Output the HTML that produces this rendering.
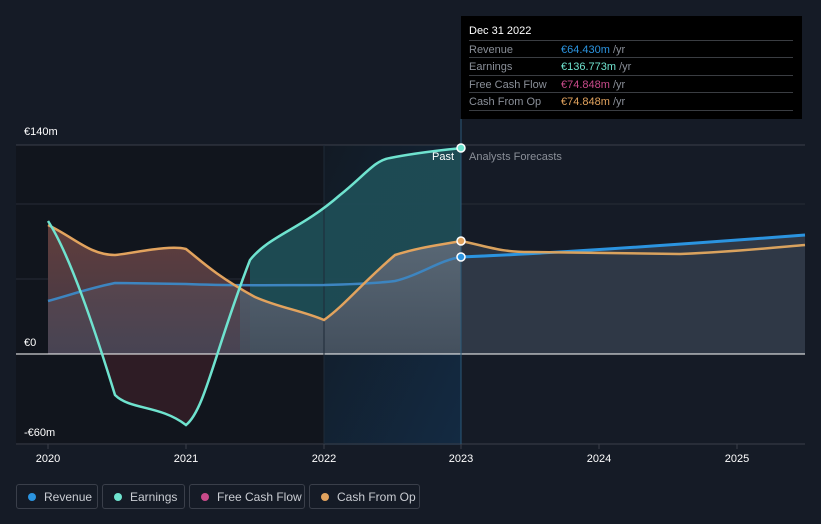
<!DOCTYPE html>
<html><head><style>
body{margin:0;background:#151b26;font-family:"Liberation Sans",sans-serif;}
.wrap{position:relative;width:821px;height:524px;overflow:hidden;background:#151b26;}
.tt{position:absolute;left:461px;top:16px;width:341px;height:103px;background:#000;}
.tt .h{position:absolute;left:8px;top:9px;color:#fff;font-size:11px;}
.tt .r{position:absolute;left:8px;width:324px;border-top:1px solid #3a3d42;height:17px;font-size:11px;color:#8a8f98;}
.tt .r span{position:absolute;left:0;top:3px}
.tt .r b{position:absolute;left:92px;top:3px;font-weight:normal}
.lg{position:absolute;top:484px;height:25px;border:1px solid #3a3f4a;border-radius:3px;color:#c9ccd2;font-size:12px;box-sizing:border-box;}
.lg i{position:absolute;left:11px;top:8px;width:8px;height:8px;border-radius:50%}
.lg span{position:absolute;left:27px;top:5px}
</style></head><body><div class="wrap">
<svg width="821" height="524" style="position:absolute;left:0;top:0">
<defs>
<linearGradient id="fc" x1="0" y1="0" x2="1" y2="1"><stop offset="0" stop-color="#121a24"/><stop offset="1" stop-color="#132a42"/></linearGradient>
<linearGradient id="gr" x1="0" y1="0" x2="0" y2="1"><stop offset="0" stop-color="#5e6a78"/><stop offset="1" stop-color="#47505e"/></linearGradient>
<linearGradient id="rd" x1="0" y1="0" x2="0" y2="1"><stop offset="0" stop-color="#613e3c"/><stop offset="1" stop-color="#3f3848"/></linearGradient>
<clipPath id="L"><rect x="0" y="0" width="240" height="524"/></clipPath>
<clipPath id="R"><rect x="240" y="0" width="600" height="524"/></clipPath>
<clipPath id="P"><rect x="0" y="0" width="461" height="524"/></clipPath>
</defs>
<rect x="16" y="145" width="308" height="300" fill="#11151d"/>
<rect x="324" y="145" width="137" height="300" fill="url(#fc)"/>
<line x1="16" y1="145" x2="805" y2="145" stroke="#3a3f4a"/>
<line x1="16" y1="204" x2="805" y2="204" stroke="#262c37"/>
<line x1="16" y1="279" x2="805" y2="279" stroke="#262c37"/>
<line x1="16" y1="444" x2="805" y2="444" stroke="#3a3f4a"/>
<!-- earnings teal area right -->
<path clip-path="url(#R)" d="M48,221 C70,255 95,330 115,395 C130,410 160,405 186,425 C205,410 215,350 250,260 C270,235 300,230 340,195 C365,175 375,160 390,158 C420,152 445,150 461,148 L461,354 L48,354Z" fill="#1f4d55" opacity="0.95"/>
<!-- below zero earnings red -->
<path d="M48,221 C70,255 95,330 115,395 C130,410 160,405 186,425 C205,410 215,350 250,260 L250,354 L48,354Z" fill="#2e1c25"/>
<!-- cash area -->
<path clip-path="url(#L)" d="M48,225 C75,238 90,255 115,255 C140,252 170,245 186,249 C200,260 215,275 255,297 L255,354 L48,354Z" fill="url(#rd)"/>
<path clip-path="url(#R)" d="M186,249 C200,260 215,275 255,297 C280,308 300,310 324,320 C345,305 360,285 395,255 C420,247 440,245 461,241 L461,354 L186,354Z" fill="url(#gr)" opacity="0.92"/>
<path d="M461,241 C490,247 500,252 530,252 C600,253 650,254 680,254 C730,252 770,248 805,245 L805,354 L461,354Z" fill="#2c333e"/>
<path d="M461,257 C560,253 700,243 805,235 L805,354 L461,354Z" fill="#2f3846"/>
<path clip-path="url(#L)" d="M48,301 C70,295 90,288 115,283 L186,284 C230,286 280,285 324,285 L324,354 L48,354Z" fill="#8090a8" opacity="0.12"/>
<line x1="16" y1="354" x2="805" y2="354" stroke="#ffffff" stroke-width="1"/>
<line x1="461" y1="119" x2="461" y2="444" stroke="#2a5a7a"/>
<line x1="324" y1="145" x2="324" y2="444" stroke="#1e2a38"/>
<!-- lines -->
<path d="M48,301 C70,295 90,288 115,283 L186,284 C230,286 280,285 324,285 C360,284 380,283 395,281 C420,275 440,260 461,257" fill="none" stroke="#3d85c0" stroke-width="2.5"/>
<path d="M461,257 C560,253 700,243 805,235" fill="none" stroke="#2b94e0" stroke-width="3"/>
<path d="M48,225 C75,238 90,255 115,255 C140,252 170,245 186,249 C200,260 215,275 255,297 C280,308 300,310 324,320 C345,305 360,285 395,255 C420,247 440,245 461,241" fill="none" stroke="#e2a35e" stroke-width="2.5"/>
<path d="M461,241 C490,247 500,252 530,252 C600,253 650,254 680,254 C730,252 770,248 805,245" fill="none" stroke="#d9a25e" stroke-width="2.5"/>
<path d="M48,221 C70,255 95,330 115,395 C130,410 160,405 186,425 C205,410 215,350 250,260 C270,235 300,230 340,195 C365,175 375,160 390,158 C420,152 445,150 461,148" fill="none" stroke="#6fe3cf" stroke-width="2.5"/>
<path clip-path="url(#L)" d="M48,221 C70,255 95,330 115,395" fill="none" stroke="#8fbfae" stroke-width="2.5" opacity="0"/>
<circle cx="461" cy="148" r="4" fill="#6fe3cf" stroke="#fff" stroke-width="1.5"/>
<circle cx="461" cy="241" r="4" fill="#e2a35e" stroke="#fff" stroke-width="1.5"/>
<circle cx="461" cy="257" r="4" fill="#2b94e0" stroke="#fff" stroke-width="1.5"/>
<g font-size="11" fill="#fff">
<text x="24" y="135">€140m</text><text x="24" y="346">€0</text><text x="24" y="436">-€60m</text>
<text x="454" y="160" text-anchor="end">Past</text>
<text x="469" y="160" fill="#8a8f98">Analysts Forecasts</text>
</g>
<g stroke="#3a3f4a"><line x1="48" y1="444" x2="48" y2="449"/><line x1="186" y1="444" x2="186" y2="449"/><line x1="324" y1="444" x2="324" y2="449"/><line x1="461" y1="444" x2="461" y2="449"/><line x1="599" y1="444" x2="599" y2="449"/><line x1="737" y1="444" x2="737" y2="449"/></g>
<g font-size="11" fill="#fff" text-anchor="middle">
<text x="48" y="462">2020</text><text x="186" y="462">2021</text><text x="324" y="462">2022</text><text x="461" y="462">2023</text><text x="599" y="462">2024</text><text x="737" y="462">2025</text>
</g>
</svg>
<div class="tt">
<div class="h">Dec 31 2022</div>
<div class="r" style="top:24px"><span>Revenue</span><b style="color:#2b94e0">€64.430m <span style="position:static;color:#8a8f98">/yr</span></b></div>
<div class="r" style="top:41px"><span>Earnings</span><b style="color:#6fe3cf">€136.773m <span style="position:static;color:#8a8f98">/yr</span></b></div>
<div class="r" style="top:59px"><span>Free Cash Flow</span><b style="color:#c84a8a">€74.848m <span style="position:static;color:#8a8f98">/yr</span></b></div>
<div class="r" style="top:76px;border-bottom:1px solid #3a3d42"><span>Cash From Op</span><b style="color:#e2a35e">€74.848m <span style="position:static;color:#8a8f98">/yr</span></b></div>
</div>
<div class="lg" style="left:16px;width:82px"><i style="background:#2b94e0"></i><span>Revenue</span></div>
<div class="lg" style="left:102px;width:83px"><i style="background:#6fe3cf"></i><span>Earnings</span></div>
<div class="lg" style="left:189px;width:116px"><i style="background:#c84a8a"></i><span>Free Cash Flow</span></div>
<div class="lg" style="left:309px;width:111px"><i style="background:#e2a35e"></i><span>Cash From Op</span></div>
</div></body></html>
